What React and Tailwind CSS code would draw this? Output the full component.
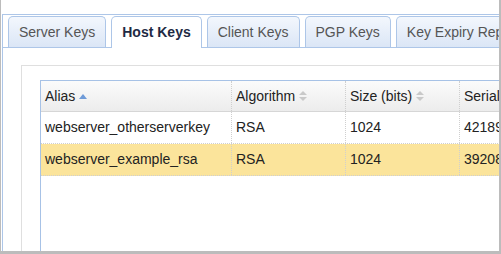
import React from 'react';

const tabs = ['Server Keys', 'Host Keys', 'Client Keys', 'PGP Keys', 'Key Expiry Report'];

const rows = [
  { alias: 'webserver_otherserverkey', algo: 'RSA', size: '1024', serial: '421894417', selected: false },
  { alias: 'webserver_example_rsa', algo: 'RSA', size: '1024', serial: '392086551', selected: true },
];

// petite flèche de tri (active = bleue vers le haut, sinon double flèche grise)
function SortIcon({ active }) {
  if (active) {
    return (
      <svg width="8" height="5" viewBox="0 0 8 5" className="ml-[4px]">
        <path d="M0 5 L4 0 L8 5 Z" fill="#6f9bd8" />
      </svg>
    );
  }
  return (
    <svg width="8" height="10" viewBox="0 0 8 10" className="ml-[4px]">
      <path d="M0 4 L4 0 L8 4 Z" fill="#c9c9c9" />
      <path d="M0 6 L4 10 L8 6 Z" fill="#c9c9c9" />
    </svg>
  );
}

function App() {
  return (
    <div
      className="w-[501px] h-[254px] overflow-hidden bg-white border-l border-r-2 border-b-[3px] border-[#bcbcbc] pt-[14px] pl-px text-[14px] text-[#222]"
      style={{ fontFamily: '"Liberation Sans", Arial, sans-serif' }}
    >
      <div className="h-full border-l border-t border-[#adc6e8] flex flex-col">
        {/* Onglets */}
        <div className="flex items-end gap-[5px] pl-[5px] pt-px border-b border-[#adc6e8] whitespace-nowrap">
          {tabs.map((t) =>
            t === 'Host Keys' ? (
              <div
                key={t}
                className="h-[32px] -mb-px px-[10px] flex items-center border border-b-0 border-[#adc6e8] rounded-t-[5px] bg-white font-bold text-[#1e2a44]"
              >
                {t}
              </div>
            ) : (
              <div
                key={t}
                className="h-[31px] px-[10px] flex items-center border border-b-0 border-[#adc6e8] rounded-t-[5px] bg-gradient-to-b from-[#f3f7fd] to-[#dbe6f6] text-[#555]"
              >
                {t}
              </div>
            )
          )}
        </div>

        {/* Panneau */}
        <div className="flex-1 pl-[18px] pt-[17px]">
          <div className="h-full border-l border-t border-[#dfdfdf] pl-[18px] pt-[14px]">
            <div className="h-full w-[600px] border-l border-t border-[#a7c2e6]">
              {/* En-tête */}
              <div className="flex h-[31px] border-b border-[#d6d6d6] bg-gradient-to-b from-[#fbfbfb] to-[#ececec]">
                <div className="w-[191px] flex items-center pl-[4px] border-r border-dotted border-[#cfcfcf]">
                  Alias <SortIcon active />
                </div>
                <div className="w-[114px] flex items-center pl-[4px] border-r border-dotted border-[#cfcfcf]">
                  Algorithm <SortIcon />
                </div>
                <div className="w-[114px] flex items-center pl-[4px] border-r border-dotted border-[#cfcfcf]">
                  Size (bits) <SortIcon />
                </div>
                <div className="w-[120px] flex items-center pl-[4px]">Serial</div>
              </div>

              {/* Lignes */}
              {rows.map((r) => (
                <div
                  key={r.alias}
                  className={`flex h-[32px] border-b border-dotted border-[#cfcfcf] ${r.selected ? 'bg-[#fbe49b]' : 'bg-white'}`}
                >
                  <div className="w-[191px] flex items-center pl-[4px] border-r border-dotted border-[#cfcfcf]">{r.alias}</div>
                  <div className="w-[114px] flex items-center pl-[4px] border-r border-dotted border-[#cfcfcf]">{r.algo}</div>
                  <div className="w-[114px] flex items-center pl-[4px] border-r border-dotted border-[#cfcfcf]">{r.size}</div>
                  <div className="w-[120px] flex items-center pl-[4px]">{r.serial}</div>
                </div>
              ))}
            </div>
          </div>
        </div>
      </div>
    </div>
  );
}

export default App;
